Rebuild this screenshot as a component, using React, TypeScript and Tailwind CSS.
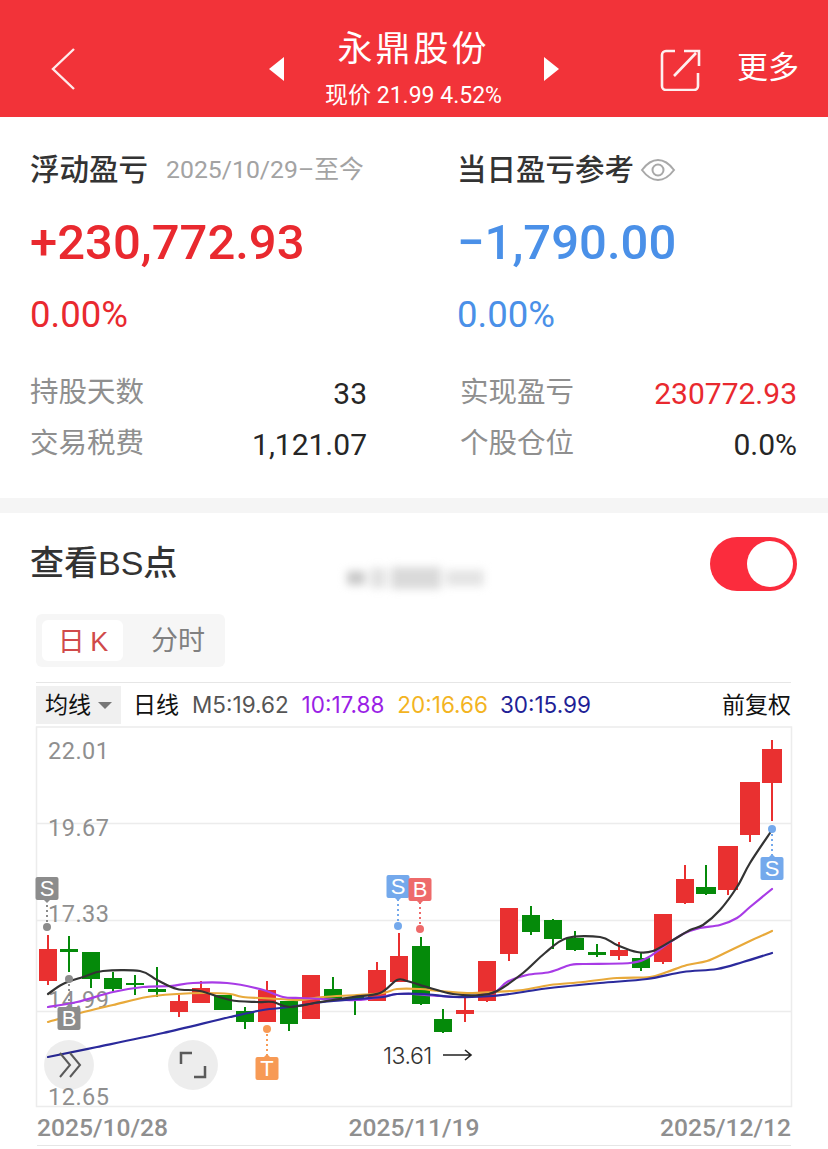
const RED = "#e93030";
const GREEN = "#058a0a";

// x, body top, body bottom, wick top, wick bottom, colour
const candles: Array<[number, number, number, number, number, string]> = [
  [48, 949, 981, 935, 985, RED],
  [69, 949, 952, 936, 972, GREEN],
  [91, 952, 979, 952, 988, GREEN],
  [113, 978, 989, 972, 991, GREEN],
  [135, 983, 985, 975, 995, GREEN],
  [157, 989, 992, 967, 997, GREEN],
  [179, 1001, 1012, 995, 1017, RED],
  [201, 988, 1003, 981, 1003, RED],
  [223, 995, 1010, 995, 1010, GREEN],
  [245, 1011, 1022, 1007, 1029, GREEN],
  [267, 990, 1022, 981, 1022, RED],
  [289, 1001, 1024, 1001, 1031, GREEN],
  [311, 975, 1019, 975, 1019, RED],
  [333, 989, 999, 977, 999, GREEN],
  [355, 997, 999, 995, 1015, GREEN],
  [377, 970, 1001, 962, 1001, RED],
  [399, 956, 982, 933, 982, RED],
  [421, 946, 1004, 937, 1005, GREEN],
  [443, 1019, 1032, 1009, 1033, GREEN],
  [465, 1010, 1014, 995, 1022, RED],
  [487, 961, 1001, 961, 1002, RED],
  [509, 908, 954, 908, 961, RED],
  [531, 915, 932, 906, 935, GREEN],
  [553, 920, 939, 919, 949, GREEN],
  [575, 938, 950, 931, 951, GREEN],
  [597, 952, 955, 944, 957, GREEN],
  [619, 950, 956, 942, 960, RED],
  [641, 958, 968, 952, 971, GREEN],
  [663, 914, 962, 914, 964, RED],
  [685, 879, 903, 865, 904, RED],
  [706, 887, 894, 865, 895, GREEN],
  [728, 846, 890, 846, 895, RED],
  [750, 782, 835, 782, 842, RED],
  [772, 749, 783, 740, 821, RED],
];

const ma5: Array<[number, number]> = [
  [48, 994], [63, 984], [83, 977], [103, 971], [140, 971], [157, 980], [177, 989], [200, 991],
  [230, 1000], [257, 1002], [273, 1002], [290, 1007], [320, 1002], [353, 997], [380, 993],
  [397, 980], [407, 981], [430, 988], [453, 994], [480, 995], [497, 991], [523, 973], [545, 953],
  [567, 938], [600, 937], [617, 945], [637, 952], [653, 951], [673, 940], [690, 930],
  [703, 925], [720, 910], [737, 887], [750, 863], [772, 830],
];
const ma10: Array<[number, number]> = [
  [48, 1007], [77, 1002], [113, 992], [143, 987], [170, 986], [193, 983], [227, 983], [260, 989],
  [283, 997], [300, 998], [323, 999], [357, 1000], [380, 997], [397, 994], [413, 994], [440, 996],
  [463, 997], [493, 993], [507, 982], [527, 975], [550, 972], [570, 965], [583, 964], [630, 963],
  [647, 958], [663, 947], [683, 934], [700, 928], [720, 925], [737, 918], [750, 907], [772, 889],
];
const ma20: Array<[number, number]> = [
  [48, 1022], [80, 1013], [113, 1005], [147, 997], [177, 994], [203, 993], [230, 994], [243, 997],
  [280, 999], [300, 1000], [323, 997], [357, 995], [383, 993], [397, 989], [420, 989], [440, 991],
  [467, 993], [493, 992], [523, 990], [550, 985], [583, 982], [617, 978], [650, 977], [667, 972],
  [687, 965], [707, 961], [727, 952], [750, 941], [772, 931],
];
const ma30: Array<[number, number]> = [
  [48, 1057], [97, 1047], [163, 1033], [230, 1017], [263, 1010], [290, 1007], [323, 1002], [357, 999],
  [383, 997], [397, 994], [423, 994], [457, 997], [493, 996], [523, 992], [550, 988], [600, 983],
  [647, 979], [683, 972], [717, 969], [743, 962], [772, 953],
];

// catmull-rom through the points so the averages don't look kinked
const smooth = (pts: Array<[number, number]>) => {
  let d = `M${pts[0][0]} ${pts[0][1]}`;
  for (let i = 0; i < pts.length - 1; i++) {
    const p0 = pts[Math.max(i - 1, 0)];
    const p1 = pts[i];
    const p2 = pts[i + 1];
    const p3 = pts[Math.min(i + 2, pts.length - 1)];
    const c1x = p1[0] + (p2[0] - p0[0]) / 6;
    const c1y = p1[1] + (p2[1] - p0[1]) / 6;
    const c2x = p2[0] - (p3[0] - p1[0]) / 6;
    const c2y = p2[1] - (p3[1] - p1[1]) / 6;
    d += ` C${c1x} ${c1y} ${c2x} ${c2y} ${p2[0]} ${p2[1]}`;
  }
  return d;
};

const Marker = ({
  x,
  dotY,
  boxY,
  label,
  color,
}: {
  x: number;
  dotY: number;
  boxY: number;
  label: string;
  color: string;
}) => {
  const below = boxY > dotY;
  return (
    <g>
      <line
        x1={x}
        x2={x}
        y1={dotY}
        y2={below ? boxY : boxY + 23}
        stroke={color}
        strokeWidth="2"
        strokeDasharray="2 3"
      />
      <circle cx={x} cy={dotY} r="4" fill={color} />
      <rect x={x - 11.5} y={boxY} width="23" height="23" rx="2" fill={color} />
      <path
        d={below ? `M${x - 3} ${boxY}L${x} ${boxY - 3}L${x + 3} ${boxY}Z` : `M${x - 3} ${boxY + 23}L${x} ${boxY + 26}L${x + 3} ${boxY + 23}Z`}
        fill={color}
      />
      <text x={x} y={boxY + 19} textAnchor="middle" fontSize="22" fill="#fff" className="font-['Liberation_Sans',sans-serif]">
        {label}
      </text>
    </g>
  );
};

const Chart = () => {
  return (
    <svg viewBox="36 727 756 380" className="block w-[756px] h-[380px] overflow-visible">
      <g stroke="#ececec" strokeWidth="1.5" fill="none">
        <path d="M36.5 727H791.5V1106.5H36.5Z" />
        <path d="M37 823.5H791M37 920.5H791M37 1011.5H791" />
      </g>

      <g fontSize="23.5" fill="#8f8f8f" letterSpacing="0.5">
        <text x="48" y="759">22.01</text>
        <text x="48" y="836">19.67</text>
        <text x="48" y="922">17.33</text>
        <text x="48" y="1008">14.99</text>
        <text x="48" y="1105">12.65</text>
      </g>

      {candles.map(([x, top, bottom, wickTop, wickBottom, color]) => (
        <g key={x}>
          <rect x={x - 1} y={wickTop} width="2" height={wickBottom - wickTop} fill={color} />
          <rect x={x - (x > 690 ? 10 : 9)} y={top} width={x > 690 ? 20 : 18} height={bottom - top} fill={color} />
        </g>
      ))}

      <g fill="none" strokeLinecap="round" strokeLinejoin="round">
        <path d={smooth(ma20)} stroke="#e8a93a" strokeWidth="2.2" />
        <path d={smooth(ma10)} stroke="#a83be6" strokeWidth="2.2" />
        <path d={smooth(ma30)} stroke="#2b2a9c" strokeWidth="2.2" />
        <path d={smooth(ma5)} stroke="#333333" strokeWidth="2.2" />
      </g>

      <Marker x={47} dotY={927} boxY={877} label="S" color="#8c8c8c" />
      <Marker x={69} dotY={979} boxY={1007} label="B" color="#8c8c8c" />
      <Marker x={267} dotY={1029} boxY={1057} label="T" color="#f79a55" />
      <Marker x={398} dotY={926} boxY={875} label="S" color="#74a9ec" />
      <Marker x={420} dotY={929} boxY={878} label="B" color="#ee6a6a" />
      <Marker x={772} dotY={829} boxY={857} label="S" color="#74a9ec" />

      <circle cx="69" cy="1065" r="25" fill="#000" fillOpacity="0.07" />
      <path d="M60 1053L70 1065L60 1077M70 1053L80 1065L70 1077" fill="none" stroke="#5a5a5a" strokeWidth="2" />
      <circle cx="193" cy="1065" r="25" fill="#000" fillOpacity="0.07" />
      <path d="M181 1064V1053H192M205 1066V1077H194" fill="none" stroke="#5a5a5a" strokeWidth="2.5" />

      <text x="383" y="1064" fontSize="23" letterSpacing="-0.5" fill="#333" className="font-['Inter',sans-serif] font-light">13.61</text>
      <path d="M443 1055H471M465 1050L471 1055L465 1060" fill="none" stroke="#222" strokeWidth="1.6" />
    </svg>
  );
};

export default function App() {
  return (
    <div className="w-[828px] h-[1149px] overflow-hidden bg-white font-['Roboto','Noto_Sans_CJK_SC',sans-serif]">
      <header className="h-[117px] bg-[#f23339] grid grid-cols-[1fr_auto_1fr] text-white">
        <div className="pl-[51px] pt-[48px]">
          <svg width="26" height="42" viewBox="0 0 26 42" fill="none" stroke="#fff" strokeOpacity="0.9" strokeWidth="2.4">
            <path d="M23 1L2 21L23 41" />
          </svg>
        </div>
        <div className="flex items-center gap-[32px] ml-[-1px]">
          <div className="w-0 h-0 mt-[20px] border-y-[12px] border-y-transparent border-r-[15px] border-r-white" />
          <div className="flex flex-col items-center w-[196px]">
            <div className="text-[35px] leading-[48px] mt-[19px] tracking-[3px] font-normal whitespace-nowrap">永鼎股份</div>
            <div className="text-[23px] leading-[30px] mt-[7px] whitespace-nowrap">现价 21.99 4.52%</div>
          </div>
          <div className="w-0 h-0 mt-[20px] border-y-[12px] border-y-transparent border-l-[15px] border-l-white" />
        </div>
        <div className="flex justify-end items-start pt-[48px] pr-[29px] gap-[36px]">
          <svg width="42" height="42" viewBox="0 0 42 42" fill="none" stroke="#fff" strokeOpacity="0.92" strokeWidth="2.6" className="ml-auto mr-[-1px] mt-[1px]">
            <path d="M15 2H6a4 4 0 0 0-4 4V37a4 4 0 0 0 4 4H34a4 4 0 0 0 4-4V24" />
            <path d="M14 27L36 4M24 2H39V17" />
          </svg>
          <span className="text-[31px] leading-[40px] whitespace-nowrap">更多</span>
        </div>
      </header>

      <section className="h-[381px] grid grid-cols-[427px_1fr] pl-[30px] pr-[31px]">
        <div className="pr-[90px]">
          <div className="flex items-center gap-[18px] mt-[35px] h-[36px]">
            <span className="text-[29.5px] font-medium text-[#333] whitespace-nowrap">浮动盈亏</span>
            <span className="text-[24.8px] text-[#a3a3a3] whitespace-nowrap">2025/10/29–至今</span>
          </div>
          <div className="text-[49px] leading-[60px] mt-[25px] font-medium text-[#e9292f] whitespace-nowrap">+230,772.93</div>
          <div className="text-[36.5px] leading-[44px] mt-[20px] text-[#e9292f]">0.00%</div>
          <div className="flex justify-between items-center pt-[29px] h-[84px]">
            <span className="text-[28.5px] text-[#8f8f8f]">持股天数</span>
            <span className="text-[30px] text-[#262626]">33</span>
          </div>
          <div className="flex justify-between items-center h-[47px]">
            <span className="text-[28.5px] text-[#8f8f8f]">交易税费</span>
            <span className="text-[30px] text-[#262626]">1,121.07</span>
          </div>
        </div>
        <div>
          <div className="flex items-center gap-[6px] mt-[35px] h-[36px]">
            <span className="text-[29.5px] font-medium text-[#333] whitespace-nowrap">当日盈亏参考</span>
            <svg width="36" height="24" viewBox="0 0 36 24" fill="none" stroke="#a8a8a8" strokeWidth="2">
              <path d="M2 12C8 4 13 2 18 2S28 4 34 12C28 20 23 22 18 22S8 20 2 12Z" />
              <circle cx="18" cy="12" r="5.5" />
            </svg>
          </div>
          <div className="text-[49px] leading-[60px] mt-[25px] font-medium text-[#4a90e8] whitespace-nowrap">−1,790.00</div>
          <div className="text-[36.5px] leading-[44px] mt-[20px] text-[#4a90e8]">0.00%</div>
          <div className="flex justify-between items-center pl-[3px] pt-[29px] h-[84px]">
            <span className="text-[28.5px] text-[#8f8f8f]">实现盈亏</span>
            <span className="text-[30px] text-[#e9292f]">230772.93</span>
          </div>
          <div className="flex justify-between items-center pl-[3px] h-[47px]">
            <span className="text-[28.5px] text-[#8f8f8f]">个股仓位</span>
            <span className="text-[30px] text-[#262626]">0.0%</span>
          </div>
        </div>
      </section>

      <div className="h-[15px] bg-[#f5f5f5]" />

      <section>
        <div className="relative flex justify-between items-center h-[101px] pl-[30px] pr-[31px]">
          <span className="text-[34px] font-medium text-[#333] font-['Liberation_Sans','Noto_Sans_CJK_SC',sans-serif]">查看BS点</span>
          <div className="absolute left-[347px] top-[54px] flex items-center gap-[5px] blur-[4px]">
            <div className="w-[18px] h-[14px] bg-[#c9c9c9]" />
            <div className="w-[16px] h-[20px] bg-[#e2e2e2]" />
            <div className="w-[50px] h-[22px] bg-[#dadada]" />
            <div className="w-[38px] h-[16px] bg-[#e4e4e4]" />
          </div>
          <div className="w-[87px] h-[54px] rounded-full bg-[#fb2c3d] flex items-center justify-end pr-[4px]">
            <div className="w-[46px] h-[46px] rounded-full bg-white" />
          </div>
        </div>

        <div className="ml-[36px] w-[189px] h-[53px] bg-[#f6f6f6] rounded-[6px] flex items-center pl-[6px]">
          <div className="w-[81px] h-[41px] bg-white rounded-[6px] text-[27px] leading-[44px] text-center tracking-[-1px] text-[#d04a4a] font-['Liberation_Sans','Noto_Sans_CJK_SC',sans-serif]">日 K</div>
          <div className="flex-1 pl-[8px] text-[27px] leading-[44px] text-center text-[#808080]">分时</div>
        </div>

        <div className="mx-[36px] w-[755px] mt-[15px] border-t border-[#e6e6e6] h-[45px] flex items-center text-[23px] font-['Inter','Noto_Sans_CJK_SC',sans-serif]">
          <div className="w-[85px] h-[38px] bg-[#f0f0f0] flex items-center pl-[9px] gap-[7px] text-[#111]">
            <span>均线</span>
            <span className="w-0 h-0 border-x-[7px] border-x-transparent border-t-[7px] border-t-[#777]" />
          </div>
          <span className="ml-[12px] text-[#111]">日线</span>
          <span className="ml-[13px] text-[22.5px] text-[#555]">M5:19.62</span>
          <span className="ml-[13px] text-[22.5px] text-[#9a1ee6]">10:17.88</span>
          <span className="ml-[13px] text-[22.5px] text-[#f3b41f]">20:16.66</span>
          <span className="ml-[12px] text-[22.5px] text-[#1f1f96]">30:15.99</span>
          <span className="ml-auto text-[#111]">前复权</span>
        </div>

        <div className="ml-[36px]">
          <Chart />
        </div>

        <div className="mx-[37px] w-[754px] flex justify-between items-center h-[39px] pt-[4px] border-b border-[#e6e6e6] text-[24.6px] font-medium text-[#8f8f8f]">
          <span>2025/10/28</span>
          <span>2025/11/19</span>
          <span>2025/12/12</span>
        </div>
      </section>
    </div>
  );
}
